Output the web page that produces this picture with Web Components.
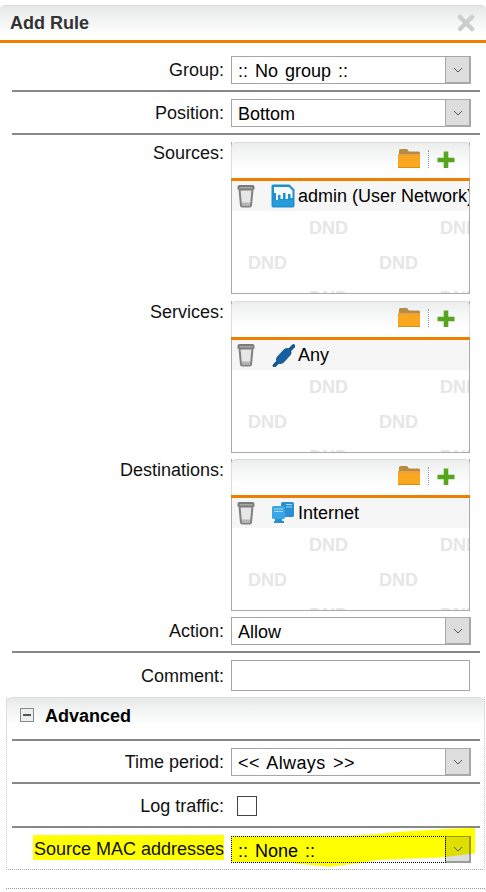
<!DOCTYPE html>
<html>
<head>
<meta charset="utf-8">
<title>Add Rule</title>
<style>
    html, body { margin: 0; padding: 0; background: #fff; }
    body { font: 18px/22px "Liberation Sans", Arial, sans-serif; color: #000; height: 892px; overflow: hidden; }
</style>
</head>
<body>
<rule-dialog heading="Add Rule">
    <form-row label="Group:" line><drop-down value=":: No group ::"></drop-down></form-row>
    <form-row label="Position:" line><drop-down value="Bottom"></drop-down></form-row>
    <form-row label="Sources:" top gap="7"><dnd-box><dnd-item text="admin (User Network)" icon="network"></dnd-item></dnd-box></form-row>
    <form-row label="Services:" top gap="6.5"><dnd-box><dnd-item text="Any" icon="any"></dnd-item></dnd-box></form-row>
    <form-row label="Destinations:" top gap="6.5"><dnd-box><dnd-item text="Internet" icon="internet"></dnd-item></dnd-box></form-row>
    <form-row label="Action:" line gap="6"><drop-down value="Allow"></drop-down></form-row>
    <form-row label="Comment:"><text-box></text-box></form-row>
    <adv-section heading="Advanced">
        <form-row label="Time period:" line><drop-down value="&lt;&lt; Always &gt;&gt;" wide></drop-down></form-row>
        <form-row label="Log traffic:" line gap="11" after="9"><check-box></check-box></form-row>
        <form-row label="Source MAC addresses" marked gap="8" after="6"><drop-down value=":: None ::" focused></drop-down><marker-stroke></marker-stroke></form-row>
    </adv-section>
</rule-dialog>

<script>
// shared row width: label column ends at 224, controls start at 231
class RuleDialog extends HTMLElement {
    constructor() {
        super();
        this.attachShadow({mode: 'open'});
        this.shadowRoot.innerHTML = `
        <style>
            :host { display: block; padding-top: 5px; }
            .title {
                display: flex;
                justify-content: space-between;
                align-items: center;
                height: 35px;
                padding: 0 11px 0 10px;
                box-sizing: border-box;
                border-radius: 5px 5px 0 0;
                border-top: 1px solid #dcdede;
                background: linear-gradient(#e6e8e8, #fff 85%);
                font-weight: bold;
                color: #333;
            }
            .title svg { filter: blur(.7px); }
            .orange { height: 3px; background: #ee7f00; }
            .body { padding-top: 6px; }
            .foot { margin: 0 1px 0 6px; border-bottom: 1px dotted #999; }
        </style>
        <div class="title">
            <span>${this.getAttribute('heading')}</span>
            <svg width="18" height="18" viewBox="0 0 18 18"><path d="M3 3L15 15M15 3L3 15" stroke="#cdcdcd" stroke-width="4.500" stroke-linecap="round"/></svg>
        </div>
        <div class="orange"></div>
        <div class="body"><slot></slot></div>
        <div class="foot"></div>
        `;
    }
}

class FormRow extends HTMLElement {
    constructor() {
        super();
        this.attachShadow({mode: 'open'});
        var gap = this.getAttribute('gap') || 7;
        var after = this.getAttribute('after') || 6;
        this.shadowRoot.innerHTML = `
        <style>
            :host { display: block; position: relative; }
            .row {
                display: flex;
                align-items: center;
                margin: 0 6px 0 12px;
                padding: ${gap}px 0 ${after}px;
            }
            :host([line]) .row { border-bottom: 2px solid #888; }
            :host([top]) .row { align-items: flex-start; padding-bottom: 0; }
            label { width: 212px; text-align: right; margin-right: 7px; color: #111; white-space: nowrap; flex: none; }
            :host([marked]) label { background: #ff0; padding: 3px 0 0; margin: -1px 7px 0 21px; width: 191px; align-self: flex-start; }
        </style>
        <div class="row">
            <label>${this.getAttribute('label')}</label>
            <slot></slot>
        </div>
        `;
    }
}

class DropDown extends HTMLElement {
    constructor() {
        super();
        this.attachShadow({mode: 'open'});
        this.shadowRoot.innerHTML = `
        <style>
            :host { display: flex; width: 240px; height: 28px; box-sizing: border-box; border: 1px solid #a5a5a5; background: #fff; }
            :host([focused]) { height: 27px; background: transparent; border-color: transparent; }
            :host([wide]) .value { letter-spacing: .4px; }
            .value { flex: 1; padding: 3px 0 0 6px; white-space: pre; min-width: 0; word-spacing: 2px; }
            :host([focused]) .value { outline: 1px dotted #000; }
            .arrow {
                width: 26px;
                margin: -1px -1px -1px 0;
                box-sizing: border-box;
                background: #ddd;
                border: 2px solid #a8a8a8;
                border-width: 1px 2px 2px 1px;
                display: flex;
                align-items: center;
                justify-content: center;
            }
            :host([focused]) .arrow { background: rgba(0,0,0,.13); border-color: rgba(0,0,0,.3); }
        </style>
        <div class="value">${this.getAttribute('value').replace(/</g, '&lt;')}</div>
        <div class="arrow"><svg width="10" height="6" viewBox="0 0 10 6"><path d="M1 1L5 5L9 1" fill="none" stroke="#555" stroke-width="1"/></svg></div>
        `;
    }
}

class TextBox extends HTMLElement {
    constructor() {
        super();
        this.attachShadow({mode: 'open'});
        this.shadowRoot.innerHTML = `<style>
            :host { display: block; width: 239px; height: 31px; box-sizing: border-box; border: 1px solid #a5a5a5; background: #fff; }
        </style>`;
    }
}

class CheckBox extends HTMLElement {
    constructor() {
        super();
        this.attachShadow({mode: 'open'});
        this.shadowRoot.innerHTML = `<style>
            :host { display: block; width: 20px; height: 20px; box-sizing: border-box; margin-left: 6px; border: 1px solid #444; background: #fff; }
        </style>`;
    }
}

class DndBox extends HTMLElement {
    constructor() {
        super();
        this.attachShadow({mode: 'open'});
        this.shadowRoot.innerHTML = `
        <style>
            :host { display: block; width: 239px; height: 152px; box-sizing: border-box; border: 1px solid #aaa; border-top: 0; background: #fff; }
            .bar {
                height: 36px;
                margin: 0 -1px;
                box-sizing: border-box;
                border: 1px solid #dadcdc;
                border-bottom: 0;
                border-radius: 5px 5px 0 0;
                background: linear-gradient(#eceeee, #fff 70%);
                display: flex;
                justify-content: flex-end;
                align-items: flex-start;
                padding: 5px 14px 0 0;
            }
            .orange { height: 3px; margin: 0 -1px; background: #ee7f00; }
            .sep { width: 0; height: 18px; margin: 2px 8px 0 7px; border-left: 1px dotted #999; }
            .list { height: 112px; overflow: hidden; }
            .marks { font-weight: bold; color: #e6e6e6; line-height: 35px; white-space: nowrap; }
            .marks div { display: flex; gap: 92px; }
            .a { padding-left: 77px; }
            .b { padding-left: 16px; }
        </style>
        <div class="bar">
            <svg width="24" height="21" viewBox="0 0 24 21">
                <path d="M2 2.500Q2 1 3.500 1H10L12 3.500H21.500Q23 3.500 23 5V6H2Z" fill="#b98a44"/>
                <path d="M1 6H23V19Q23 20 22 20H2Q1 20 1 19Z" fill="#fba61f"/>
                <path d="M1 6H23V8H1Z" fill="#e9a240"/>
                <path d="M1 19H23V20H1Z" fill="#d98d1c"/>
            </svg>
            <span class="sep"></span>
            <svg width="18" height="18" viewBox="0 0 18 18" style="margin-top:3px"><path d="M9 .500V17M.500 9H17.500" stroke="#55a61e" stroke-width="4.600"/></svg>
        </div>
        <div class="orange"></div>
        <div class="list">
            <slot></slot>
            <div class="marks">
                <div class="a"><span>DND</span><span>DND</span></div>
                <div class="b"><span>DND</span><span>DND</span></div>
                <div class="a"><span>DND</span><span>DND</span></div>
            </div>
        </div>
        `;
    }
}

const ITEM_ICONS = {
    network: `<path d="M2 0.500H18.500L23.500 5.500V21.500Q23.500 23.500 21.500 23.500H2Q0.500 23.500 0.500 21.500V2Q0.500 0.500 2 0.500Z" fill="#1f8fd0"/>
        <path d="M3 3H18L21.500 6.500V14H19.500V10H17V15H14.500V9H12V15H9.500V11H7V16H5V9H3Z" fill="#f3fafe"/>
        <path d="M2 16H22V22H2Z" fill="#2ba6e2" opacity=".6"/>`,
    any: `<path d="M3.500 22.500L22.500 3" stroke="#14568f" stroke-width="3.800" stroke-linecap="round" fill="none"/>
        <path d="M9.500 16.500L16 9.500" stroke="#175f9d" stroke-width="9" stroke-linecap="round" fill="none"/>`,
    internet: `<rect x="10" y="1" width="13" height="15" rx="1.500" fill="#2a8fd2"/>
        <rect x="1" y="5" width="13" height="13" rx="1.500" fill="#3aa5e6"/>
        <path d="M15 3.500H21M15 6H21M3 8H12M3 10.500H12" stroke="#a6d8f4" stroke-width="1"/>
        <path d="M4 18H11V20H13V22H3V20H4Z" fill="#2a8fd2"/>`
};

class DndItem extends HTMLElement {
    constructor() {
        super();
        this.attachShadow({mode: 'open'});
        this.shadowRoot.innerHTML = `
        <style>
            :host { display: flex; align-items: center; height: 30px; background: #f6f6f6; white-space: nowrap; overflow: hidden; }
            .trash { margin-left: 5px; flex: none; filter: blur(.3px); }
            .pic { margin-left: 16px; margin-right: 3px; flex: none; }
        </style>
        <svg class="trash" width="18" height="24" viewBox="0 0 18 24">
            <path d="M2.500 5.500L4 21.500Q4.200 22.500 5.200 22.500H12.800Q13.800 22.500 14 21.500L15.500 5.500Z" fill="#e6e6e6" stroke="#808080" stroke-width="2"/>
            <path d="M.500 3Q.500 1 2.500 1H15.500Q17.500 1 17.500 3V5.500H.500Z" fill="#7a7a7a"/>
            <path d="M2.500 3H15.500V4.500H2.500Z" fill="#a8a8a8"/>
            <path d="M5 18.500H13V21H5Z" fill="#b4b4b4"/>
        </svg>
        <svg class="pic" width="24" height="24" viewBox="0 0 24 24">${ITEM_ICONS[this.getAttribute('icon')]}</svg>
        <span>${this.getAttribute('text')}</span>
        `;
    }
}

class AdvSection extends HTMLElement {
    constructor() {
        super();
        this.attachShadow({mode: 'open'});
        this.shadowRoot.innerHTML = `
        <style>
            :host { display: block; margin: 0 1px 18px 6px; border-bottom: 1px dotted #aaa; border-left: 1px dotted #ccc; border-right: 1px dotted #ccc; }
            .head {
                height: 42px;
                box-sizing: border-box;
                margin: 0 -1px;
                padding: 7px 0 0 13px;
                display: flex;
                align-items: flex-start;
                border: 1px solid #dcdede;
                border-bottom: 0;
                border-radius: 6px 6px 0 0;
                background: linear-gradient(#e8eaea, #fff 65%);
                font-weight: bold;
            }
            .head svg { margin: 3px 11px 0 0; }
            .line { height: 2px; margin: 0 4px 0 5px; background: #888; }
            .rows { position: relative; isolation: isolate; margin: 0 -2px 0 -7px; }
        </style>
        <div class="head">
            <svg width="14" height="14" viewBox="0 0 14 14"><rect x=".5" y=".5" width="13" height="13" fill="#eee" stroke="#888"/><path d="M3 7H11" stroke="#222" stroke-width="1.500"/></svg>
            <span>${this.getAttribute('heading')}</span>
        </div>
        <div class="line"></div>
        <div class="rows"><slot></slot></div>
        `;
    }
}

// the yellow marker someone drew over the screenshot, kept under the row's content
class MarkerStroke extends HTMLElement {
    constructor() {
        super();
        this.attachShadow({mode: 'open'});
        this.shadowRoot.innerHTML = `
        <style>
            :host { position: absolute; left: 225px; top: -2px; width: 256px; height: 44px; z-index: -1; pointer-events: none; }
            svg { display: block; }
        </style>
        <svg width="256" height="44" viewBox="0 0 256 44">
            <path d="M6 10L75 10L108 10.700L142 9L175 5.700L218 3.300L250 1.700V27.300L218 31.300L152 34L135 37L105 40.700L68 37.300L68 36L6 36Z" fill="#ff0"/>
        </svg>
        `;
    }
}

customElements.define('rule-dialog', RuleDialog);
customElements.define('form-row', FormRow);
customElements.define('drop-down', DropDown);
customElements.define('text-box', TextBox);
customElements.define('check-box', CheckBox);
customElements.define('dnd-box', DndBox);
customElements.define('dnd-item', DndItem);
customElements.define('adv-section', AdvSection);
customElements.define('marker-stroke', MarkerStroke);
</script>
</body>
</html>
